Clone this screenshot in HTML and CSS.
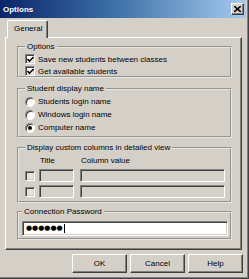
FILE: index.html
```html
<!DOCTYPE html>
<html lang="en">
<head>
    <meta charset="UTF-8">
    <meta name="viewport" content="width=device-width, initial-scale=1.0">
    <title>Options</title>
    <link rel="stylesheet" href="styles.css">
</head>
<body>

    <div class="window">
        <div class="titlebar">
            <span class="title">Options</span>
            <span class="close">
                <svg width="7" height="6" viewBox="0 0 7 6">
                    <path d="M0 0 L7 6 M7 0 L0 6" stroke="#000" stroke-width="1.6"/>
                </svg>
            </span>
        </div>

        <div class="tabs">
            <div class="tab">General</div>
        </div>

        <div class="panel">
            <fieldset class="group g-options">
                <legend>Options</legend>
                <div class="row"><span class="check"><svg width="7" height="7" viewBox="0 0 7 7"><path d="M0.5 3 L2.5 5.2 L6.5 1" fill="none" stroke="#000" stroke-width="1.6"/></svg></span>Save new students between classes</div>
                <div class="row"><span class="check"><svg width="7" height="7" viewBox="0 0 7 7"><path d="M0.5 3 L2.5 5.2 L6.5 1" fill="none" stroke="#000" stroke-width="1.6"/></svg></span>Get available students</div>
            </fieldset>

            <fieldset class="group g-student">
                <legend>Student display name</legend>
                <div class="row radio-row"><span class="radio"></span>Students login name</div>
                <div class="row radio-row"><span class="radio"></span>Windows login name</div>
                <div class="row radio-row"><span class="radio on"></span>Computer name</div>
            </fieldset>

            <fieldset class="group g-columns">
                <legend>Display custom columns in detailed view</legend>
                <div class="col-head">
                    <span class="h-title">Title</span>
                    <span class="h-value">Column value</span>
                </div>
                <div class="col-row">
                    <span class="check off"></span>
                    <span class="field f-title"></span>
                    <span class="field f-value"></span>
                </div>
                <div class="col-row">
                    <span class="check off"></span>
                    <span class="field f-title"></span>
                    <span class="field f-value"></span>
                </div>
            </fieldset>

            <fieldset class="group g-pass">
                <legend>Connection Password</legend>
                <div class="password">●●●●●●<span class="caret"></span></div>
            </fieldset>
        </div>

        <div class="buttons">
            <button class="btn">OK</button>
            <button class="btn">Cancel</button>
            <button class="btn">Help</button>
        </div>
    </div>

</body>
</html>
```

FILE: styles.css
```css
* {
    box-sizing: border-box;
}
body {
    margin: 0;
    font-family: "Liberation Sans", Arial, sans-serif;
    font-size: 8px;
    color: #000;
}
.window {
    width: 249px;
    height: 279px;
    background: #d4d0c8;
    border-right: 1px solid #404040;
    border-bottom: 1px solid #404040;
    box-shadow: inset -1px -1px 0 #808080;
    display: flex;
    flex-direction: column;
}

/* title bar */
.titlebar {
    height: 18px;
    margin-right: 2px;
    padding: 0 2px 0 3px;
    background: linear-gradient(to right, #0a246a, #3a6ea5 45%, #a6caf0);
    display: flex;
    align-items: center;
    justify-content: space-between;
}
.title {
    color: #fff;
    font-weight: bold;
    font-size: 8px;
}
.close {
    width: 13px;
    height: 12px;
    background: #d4d0c8;
    border: 1px solid;
    border-color: #fff #404040 #404040 #fff;
    box-shadow: inset -1px -1px 0 #808080;
    display: flex;
    align-items: center;
    justify-content: center;
}

/* tab */
.tabs {
    display: flex;
    padding-left: 7px;
    margin-top: 2px;
}
.tab {
    position: relative;
    z-index: 1;
    height: 18px;
    margin-bottom: -1px;
    padding: 0 5px 0 6px;
    background: #d4d0c8;
    border: 1px solid;
    border-bottom: none;
    border-color: #fff #404040 #fff #fff;
    border-radius: 2px 2px 0 0;
    box-shadow: inset -1px 0 0 #808080;
    line-height: 15px;
}

/* tab page */
.panel {
    margin-left: 5px;
    width: 237px;
    height: 213px;
    border: 1px solid;
    border-color: #fff #404040 #404040 #fff;
    box-shadow: inset -1px -1px 0 #808080;
    padding: 0 0 0 11px;
}
.group {
    width: 215px;
    margin: 0;
    padding: 0 0 0 6px;
    border: 2px groove #e8e6e0;
    min-inline-size: 0;
}
.group legend {
    padding: 0 2px;
    line-height: 10px;
}
.g-options {
    margin-top: 4px;
    height: 36px;
    padding-top: 1px;
}
.g-student {
    margin-top: 6px;
    height: 54px;
    padding-top: 1px;
}
.g-columns {
    margin-top: 5px;
    height: 60px;
    padding-top: 3px;
}
.g-pass {
    margin-top: 4px;
    height: 33px;
    padding: 4px 0 0 3px;
}

.row {
    height: 12px;
    display: flex;
    align-items: center;
    white-space: nowrap;
}
.radio-row {
    height: 13px;
}
.check {
    width: 10px;
    height: 10px;
    margin-right: 3px;
    background: #fff;
    border: 1px solid;
    border-color: #808080 #fff #fff #808080;
    box-shadow: inset 1px 1px 0 #404040, inset -1px -1px 0 #d4d0c8;
    display: flex;
    align-items: center;
    justify-content: center;
    flex: none;
}
.check.off {
    background: #e4e2dc;
}
.radio {
    width: 10px;
    height: 10px;
    margin-right: 3px;
    border-radius: 50%;
    background: #fff;
    border: 1px solid;
    border-color: #808080 #fff #fff #808080;
    box-shadow: inset 1px 1px 0 #404040;
    display: flex;
    align-items: center;
    justify-content: center;
    flex: none;
}
.radio.on::after {
    content: "";
    width: 4px;
    height: 4px;
    border-radius: 50%;
    background: #000;
}

/* custom columns */
.col-head {
    height: 10px;
    display: flex;
    line-height: 10px;
}
.h-title {
    margin-left: 15px;
    width: 41px;
}
.col-row {
    display: flex;
    align-items: center;
    height: 13px;
    margin-top: 3px;
}
.col-row:first-of-type {
    margin-top: 0;
}
.col-row .check {
    margin-right: 4px;
}
.field {
    height: 13px;
    background: #d4d0c8;
    border: 1px solid;
    border-color: #808080 #fff #fff #808080;
    box-shadow: inset 1px 1px 0 #404040, inset -1px -1px 0 #d4d0c8;
}
.f-title {
    width: 35px;
    margin-right: 6px;
}
.f-value {
    width: 145px;
}

/* password */
.password {
    width: 206px;
    height: 15px;
    background: #fff;
    border: 1px solid;
    border-color: #808080 #fff #fff #808080;
    box-shadow: inset 1px 1px 0 #404040, inset -1px -1px 0 #d4d0c8;
    padding-left: 3px;
    font-family: "DejaVu Sans", sans-serif;
    font-size: 7px;
    line-height: 13px;
    display: flex;
    align-items: center;
}
.caret {
    width: 1px;
    height: 9px;
    margin-left: 1px;
    background: #000;
}

/* buttons */
.buttons {
    display: flex;
    justify-content: flex-end;
    gap: 3px;
    margin-top: 4px;
    padding-right: 5px;
}
.btn {
    width: 55px;
    height: 19px;
    padding: 0;
    font-family: "Liberation Sans", Arial, sans-serif;
    font-size: 8px;
    color: #000;
    background: #d4d0c8;
    border: 1px solid;
    border-color: #fff #404040 #404040 #fff;
    box-shadow: inset -1px -1px 0 #808080;
}
```
